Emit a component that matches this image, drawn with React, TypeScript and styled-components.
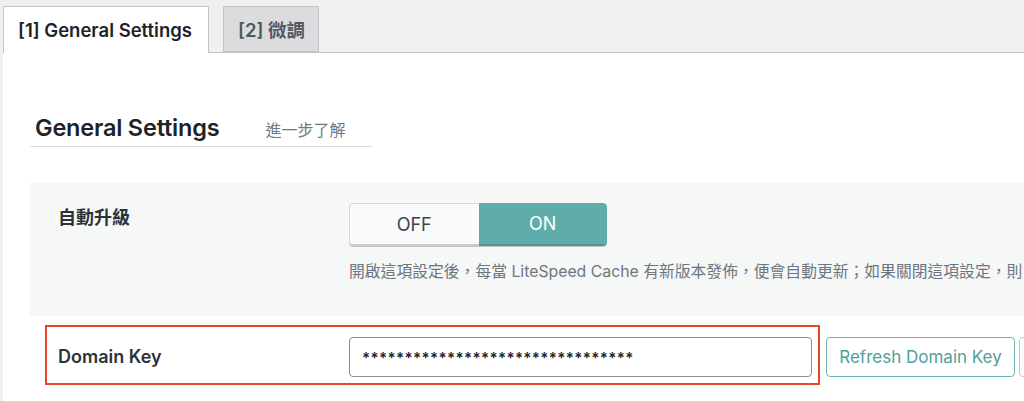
import React from "react";
import styled, { createGlobalStyle } from "styled-components";

const Global = createGlobalStyle`
  html, body { margin: 0; padding: 0; }
  body {
    background: #f0f0f1;
    font-family: Inter, "Noto Sans CJK TC", sans-serif;
    color: #1d2327;
    overflow: hidden;
  }
`;

const Page = styled.div`
  width: 1024px;
  height: 401px;
  padding-left: 3px;
  box-sizing: border-box;
  overflow: hidden;
`;

const TabBar = styled.div`
  display: flex;
  align-items: flex-end;
  gap: 14px;
  height: 53px;
  box-sizing: border-box;
  padding-top: 7px;
  border-bottom: 1px solid #c3c4c7;
`;

const Tab = styled.div<{ $active?: boolean }>`
  box-sizing: border-box;
  height: ${(p) => (p.$active ? "47px" : "46px")};
  margin-bottom: ${(p) => (p.$active ? "-1px" : "0")};
  width: ${(p) => (p.$active ? "206px" : "96px")};
  padding-left: 14px;
  display: flex;
  align-items: center;
  border: 1px solid #c3c4c7;
  border-bottom: ${(p) => (p.$active ? "none" : "1px solid #c3c4c7")};
  background: ${(p) => (p.$active ? "#ffffff" : "#dcdcde")};
  color: ${(p) => (p.$active ? "#1d2327" : "#50575e")};
  font-weight: 600;
  font-size: 18.5px;
  white-space: nowrap;
`;

const Content = styled.div`
  background: #ffffff;
  height: 348px;
  padding: 61px 0 0 27px;
  box-sizing: border-box;
`;

const HeadingRow = styled.div`
  width: 342px;
  display: flex;
  align-items: baseline;
  gap: 46px;
  padding: 0 0 4px 5px;
  box-sizing: border-box;
  border-bottom: 1px solid #dcdcde;
`;

const Heading = styled.h3`
  margin: 0;
  font-size: 23.5px;
  line-height: 28px;
  font-weight: 600;
  color: #1d2327;
  letter-spacing: -0.2px;
`;

const LearnLink = styled.span`
  font-size: 16px;
  color: #6b7b88;
`;

const OptionRow = styled.div<{ $shaded?: boolean }>`
  position: relative;
  display: flex;
  background: ${(p) => (p.$shaded ? "#f6f7f7" : "transparent")};
  padding: ${(p) => (p.$shaded ? "20px 0 35px 28px" : "21px 0 12px 28px")};
`;

const OptionGap = styled.div`
  height: 36px;
`;

const Label = styled.div<{ $top?: number }>`
  width: 291px;
  flex: none;
  font-size: 18px;
  line-height: 22px;
  font-weight: 600;
  color: #2c3338;
  padding-top: ${(p) => p.$top ?? 0}px;
`;

const Field = styled.div`
  display: flex;
  flex-direction: column;
  gap: 16px;
  white-space: nowrap;
`;

const Toggle = styled.div`
  display: flex;
  width: 258px;
  height: 43px;
  border-radius: 4px;
  overflow: hidden;
  box-shadow: 0 1px 0 #c3c4c7;
`;

const ToggleHalf = styled.div<{ $on?: boolean }>`
  flex: 1;
  display: flex;
  align-items: center;
  justify-content: center;
  font-size: 18px;
  box-sizing: border-box;
  background: ${(p) => (p.$on ? "#5fadaa" : "#f9fafb")};
  color: ${(p) => (p.$on ? "#ffffff" : "#3c434a")};
  border: ${(p) => (p.$on ? "none" : "1px solid #d5d7da")};
  border-right: none;
  border-radius: ${(p) => (p.$on ? "0 4px 4px 0" : "4px 0 0 4px")};
  border-bottom: ${(p) => (p.$on ? "2px solid #4d9693" : "2px solid #c8cacd")};
`;

const Desc = styled.div`
  font-size: 15.8px;
  line-height: 19px;
  color: #6d7680;
`;

const Controls = styled.div`
  display: flex;
  gap: 14px;
  flex: none;
`;

const KeyInput = styled.div`
  width: 463px;
  height: 40px;
  flex: none;
  box-sizing: border-box;
  border: 1px solid #8c8f94;
  border-radius: 4px;
  display: flex;
  align-items: center;
  padding: 0 12px;
  font-size: 15px;
  color: #1d2327;
  letter-spacing: 0.4px;
  font-weight: 600;
`;

const OutlineButton = styled.div`
  height: 40px;
  flex: none;
  width: 189px;
  box-sizing: border-box;
  border: 1px solid #6bb5b2;
  border-radius: 4px;
  display: flex;
  align-items: center;
  justify-content: center;
  font-size: 17px;
  white-space: nowrap;
  color: #4f9f9c;
  background: #ffffff;
`;

const NextButton = styled(OutlineButton)`
  margin-left: -10px;
  width: 40px;
  border-color: #c3c4c7;
`;

const Highlight = styled.div`
  position: absolute;
  left: 15px;
  top: 9px;
  width: 775px;
  height: 60px;
  border: 2px solid #e5472d;
  box-sizing: border-box;
  pointer-events: none;
`;

export default function App() {
  return (
    <>
      <Global />
      <Page>
        <TabBar>
          <Tab $active>[1] General Settings</Tab>
          <Tab>[2] 微調</Tab>
        </TabBar>
        <Content>
          <HeadingRow>
            <Heading>General Settings</Heading>
            <LearnLink>進一步了解</LearnLink>
          </HeadingRow>
          <OptionGap />
          <OptionRow $shaded>
            <Label $top={4}>自動升級</Label>
            <Field>
              <Toggle>
                <ToggleHalf>OFF</ToggleHalf>
                <ToggleHalf $on>ON</ToggleHalf>
              </Toggle>
              <Desc>
                開啟這項設定後，每當 LiteSpeed Cache 有新版本發佈，便會自動更新；如果關閉這項設定，則
              </Desc>
            </Field>
          </OptionRow>
          <OptionRow>
            <Highlight />
            <Label $top={9}>Domain Key</Label>
            <Controls>
              <KeyInput>********************************</KeyInput>
              <OutlineButton>Refresh Domain Key</OutlineButton>
              <NextButton />
            </Controls>
          </OptionRow>
        </Content>
      </Page>
    </>
  );
}
